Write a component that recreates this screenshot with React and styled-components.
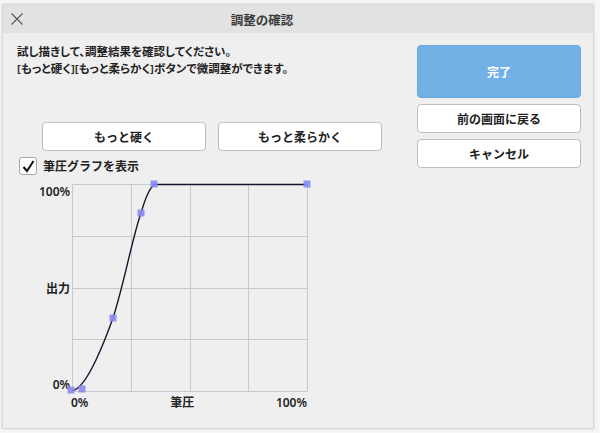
import React from 'react'
import styled, { createGlobalStyle } from 'styled-components'

const GlobalStyle = createGlobalStyle`
  html, body {
    margin: 0;
    background: #f6f6f6;
    font-family: "Noto Sans", "Noto Sans CJK JP", sans-serif;
    color: #222;
  }
`

const Page = styled.div`
  width: 600px;
  height: 433px;
  padding: 5px 0 0 3px;
  box-sizing: border-box;
`

const Dialog = styled.div`
  width: 590px;
  height: 423px;
  background: #efefef;
  box-shadow: 0 0 2px 1px rgba(0, 0, 0, 0.18);
  display: flex;
  flex-direction: column;
`

const TitleBar = styled.div`
  height: 28px;
  flex: none;
  background: #e2e2e2;
  display: flex;
  align-items: center;
  position: relative;
  padding-right: 72px;
`

const CloseButton = styled.div`
  position: absolute;
  left: 7px;
  top: 7px;
  width: 14px;
  height: 14px;
  display: flex;
  align-items: center;
  justify-content: center;
`

const Title = styled.div`
  flex: 1;
  text-align: center;
  font-size: 12.5px;
  font-weight: 700;
  color: #3a3a3a;
`

const Body = styled.div`
  flex: 1;
  display: flex;
`

const Left = styled.div`
  flex: 1;
  padding: 10px 0 0 14px;
  display: flex;
  flex-direction: column;
`

const Instructions = styled.p`
  margin: 0;
  font-size: 11.5px;
  line-height: 17px;
  font-weight: 600;
  font-feature-settings: "palt";
`

const ButtonRow = styled.div`
  display: flex;
  gap: 12px;
  margin: 45px 0 0 25px;
`

const Button = styled.div`
  width: 164px;
  height: ${(p) => (p.$tall ? 53 : 29)}px;
  box-sizing: border-box;
  border-radius: 4px;
  border: 1px solid ${(p) => (p.$primary ? '#6aa9df' : '#bdbdbd')};
  background: ${(p) => (p.$primary ? '#72b0e5' : '#fff')};
  color: ${(p) => (p.$primary ? '#fff' : '#222')};
  font-size: 12px;
  font-weight: 700;
  display: flex;
  align-items: center;
  justify-content: center;
`

const CheckRow = styled.label`
  display: flex;
  align-items: center;
  gap: 6px;
  margin: 6px 0 0 2px;
  font-size: 12px;
  font-weight: 600;
`

const CheckBox = styled.span`
  width: 18px;
  height: 18px;
  box-sizing: border-box;
  border: 1px solid #a8a8a8;
  border-radius: 3px;
  background: #fff;
  display: flex;
  align-items: center;
  justify-content: center;
`

const ChartGrid = styled.div`
  display: grid;
  grid-template-columns: 55px 236px;
  grid-template-rows: 207px auto;
  margin-top: 9px;
  font-size: 12px;
  font-weight: 600;
`

const YLabels = styled.div`
  display: flex;
  flex-direction: column;
  justify-content: space-between;
  align-items: flex-end;
  padding: 1px 2px 0 0;
  line-height: 13px;
`

const XLabels = styled.div`
  grid-column: 2;
  display: flex;
  justify-content: space-between;
  margin: 5px 1px 0 -1px;
  line-height: 13px;
`

const Chart = styled.svg`
  overflow: visible;
  display: block;
`

const Right = styled.div`
  width: 164px;
  margin-right: 12px;
  padding-top: 12px;
  display: flex;
  flex-direction: column;
  gap: 6px;
`

const W = 235
const H = 207
const points = [
  [-1, 206],
  [10, 205],
  [41, 134],
  [69, 29],
  [82, 0],
  [235, 0],
]

function PressureChart() {
  const xs = [0, 1, 2, 3, 4].map((i) => Math.round((W * i) / 4) + 0.5)
  const ys = [0, 1, 2, 3, 4].map((i) => Math.round((H * i) / 4) + 0.5)
  return (
    <Chart width={W + 1} height={H + 1} viewBox={`0 0 ${W + 1} ${H + 1}`}>
      {xs.map((x) => (
        <line key={'v' + x} x1={x} x2={x} y1={0.5} y2={H + 0.5} stroke="#c9c9c9" />
      ))}
      {ys.map((y) => (
        <line key={'h' + y} x1={0.5} x2={W + 0.5} y1={y} y2={y} stroke="#c9c9c9" />
      ))}
      <path
        d="M0,206.5 C12,206 28,170 41,134 C52,100 60,55 69,29 C73,15 77,5 82,0.5 L235,0.5"
        fill="none"
        stroke="#15152e"
        strokeWidth="1.4"
      />
      {points.map(([x, y]) => (
        <rect key={x} x={x - 3.5} y={y - 3.5} width="7" height="7" fill="#8a8af2" fillOpacity="0.9" />
      ))}
    </Chart>
  )
}

export default function App() {
  return (
    <Page>
      <GlobalStyle />
      <Dialog>
        <TitleBar>
          <CloseButton>
            <svg width="12" height="12" viewBox="0 0 12 12">
              <path d="M0.5 0.5 L11.5 11.5 M11.5 0.5 L0.5 11.5" stroke="#555" strokeWidth="1.1" />
            </svg>
          </CloseButton>
          <Title>調整の確認</Title>
        </TitleBar>
        <Body>
          <Left>
            <Instructions>
              試し描きして、調整結果を確認してください。
              <br />
              [もっと硬く][もっと柔らかく]ボタンで微調整ができます。
            </Instructions>
            <ButtonRow>
              <Button>もっと硬く</Button>
              <Button>もっと柔らかく</Button>
            </ButtonRow>
            <CheckRow>
              <CheckBox>
                <svg width="13" height="13" viewBox="0 0 13 13">
                  <path d="M1.5 7 L5 11 L11.5 1" fill="none" stroke="#111" strokeWidth="2" />
                </svg>
              </CheckBox>
              筆圧グラフを表示
            </CheckRow>
            <ChartGrid>
              <YLabels>
                <span>100%</span>
                <span>出力</span>
                <span>0%</span>
              </YLabels>
              <PressureChart />
              <XLabels>
                <span>0%</span>
                <span>筆圧</span>
                <span>100%</span>
              </XLabels>
            </ChartGrid>
          </Left>
          <Right>
            <Button $primary $tall>完了</Button>
            <Button>前の画面に戻る</Button>
            <Button>キャンセル</Button>
          </Right>
        </Body>
      </Dialog>
    </Page>
  )
}
